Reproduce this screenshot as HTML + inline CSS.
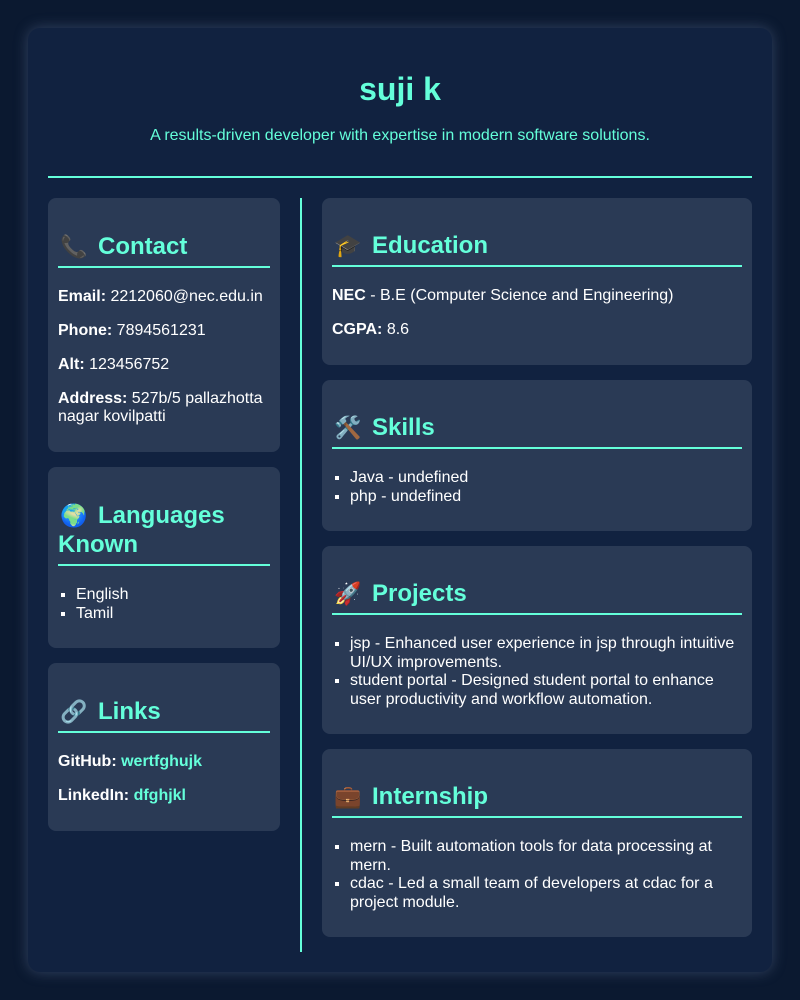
<!DOCTYPE html>
<html><head><meta charset="utf-8"><style>
*{box-sizing:border-box}
body{margin:0;background:#0b1930;font-family:"Liberation Sans",Arial,sans-serif;width:800px;height:1000px;overflow:hidden}
.c{position:absolute;left:28px;top:28px;width:744px;height:944px;background:#112240;border-radius:12px;box-shadow:0 0 14px rgba(100,120,160,0.45);padding:20px}
.hd{height:130px;border-bottom:2px solid #64ffda;text-align:center;color:#64ffda}
.hd h1{margin:0;padding-top:23px;font-size:32px;line-height:36px}
.hd p{margin:20px 0 0;font-size:16px;line-height:18px}
.m{display:flex;margin-top:20px;height:754px}
.l{width:232px}
.r{width:452px;margin-left:20px;border-left:2px solid #64ffda;padding-left:20px}
.k{background:#2a3a55;border-radius:8px;padding:12px 10px 10px;margin-bottom:15px;color:#fff;font-size:16px;line-height:18px}
.k h2{margin:22px 0 20px;font-size:24px;line-height:28px;color:#64ffda;border-bottom:2px solid #64ffda;padding-bottom:5px}
.l .k h2{line-height:29px}
.k p{margin:16px 0}
.k ul{margin:16px 0 15px;padding-left:18px;list-style:square;line-height:18.5px}
a{color:#64ffda;font-weight:bold;text-decoration:none}
.e{font-size:22px;display:inline-block;width:30px;margin-left:2px;margin-right:8px}
</style></head><body>
<div class="c">
<div class="hd"><h1>suji k</h1><p>A results-driven developer with expertise in modern software solutions.</p></div>
<div class="m">
<div class="l">
<div class="k"><h2><span class="e">📞</span>Contact</h2>
<p><b>Email:</b> 2212060@nec.edu.in</p>
<p><b>Phone:</b> 7894561231</p>
<p><b>Alt:</b> 123456752</p>
<p><b>Address:</b> 527b/5 pallazhotta nagar kovilpatti</p></div>
<div class="k"><h2><span class="e">🌍</span>Languages Known</h2>
<ul><li>English</li><li>Tamil</li></ul></div>
<div class="k"><h2><span class="e">🔗</span>Links</h2>
<p><b>GitHub:</b> <a>wertfghujk</a></p>
<p><b>LinkedIn:</b> <a>dfghjkl</a></p></div>
</div>
<div class="r">
<div class="k"><h2><span class="e">🎓</span>Education</h2>
<p><b>NEC</b> - B.E (Computer Science and Engineering)</p>
<p><b>CGPA:</b> 8.6</p></div>
<div class="k"><h2><span class="e">🛠️</span>Skills</h2>
<ul><li>Java - undefined</li><li>php - undefined</li></ul></div>
<div class="k"><h2><span class="e">🚀</span>Projects</h2>
<ul><li>jsp - Enhanced user experience in jsp through intuitive UI/UX improvements.</li><li>student portal - Designed student portal to enhance user productivity and workflow automation.</li></ul></div>
<div class="k"><h2><span class="e">💼</span>Internship</h2>
<ul><li>mern - Built automation tools for data processing at mern.</li><li>cdac - Led a small team of developers at cdac for a project module.</li></ul></div>
</div>
</div>
</div>
</body></html>
